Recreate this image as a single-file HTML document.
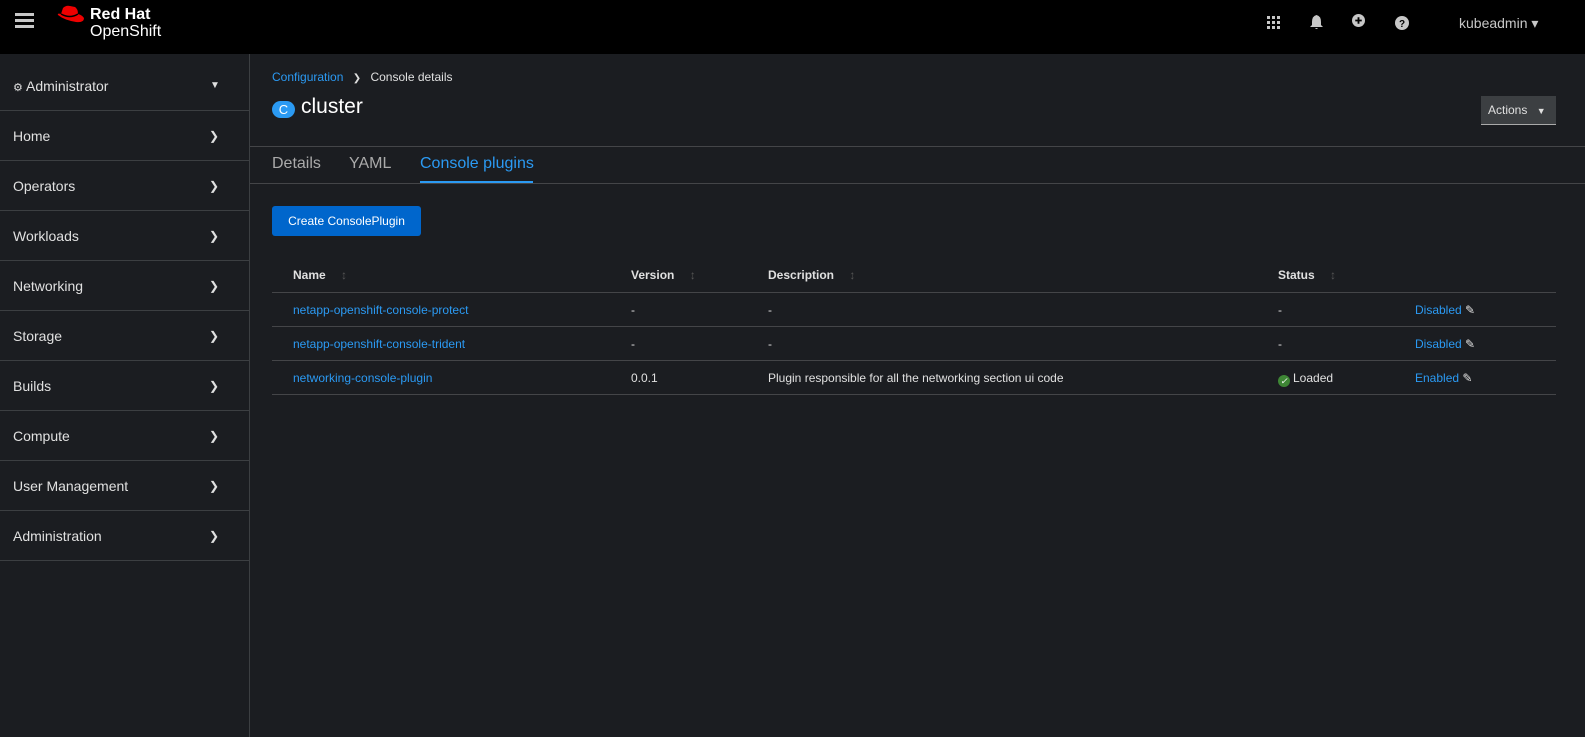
<!DOCTYPE html>
<html><head><meta charset="utf-8"><style>
*{box-sizing:border-box;margin:0;padding:0}
body{width:1585px;height:737px;background:#1b1d21;font-family:"Liberation Sans",sans-serif;color:#e0e0e0;overflow:hidden;position:relative}
.top{position:absolute;left:0;top:0;width:1585px;height:54px;background:#000}
.side{position:absolute;left:0;top:54px;width:250px;height:683px;background:#1b1d21;border-right:1px solid #3c3f42}
.nav{position:absolute;left:0;width:249px;height:50px;border-bottom:1px solid #3c3f42;font-size:14px;color:#e0e0e0;padding-left:13px;line-height:50px}
.nav .ch{position:absolute;left:209px;top:0;font-size:12px}
.abs{position:absolute}
a{color:#2b9af3;text-decoration:none}
.row{position:absolute;left:272px;width:1284px;border-bottom:1px solid #444548;height:34px;font-size:12px}
.row>span{position:absolute;top:10px}
.ok{display:inline-block;width:12px;height:12px;border-radius:6px;background:#3e8635;color:#fff;font-size:9px;text-align:center;line-height:12px;vertical-align:-2px;margin-right:3px}
</style></head><body>
<div class="top">
 <div class="abs" style="left:15px;top:13px;width:19px;height:3px;background:#c7c7c7;box-shadow:0 6px 0 #c7c7c7,0 12px 0 #c7c7c7"></div>
 <svg class="abs" style="left:56px;top:5px" width="30" height="22" viewBox="0 0 30 22"><path d="M7 3 Q10 0 14 1 L19 2 Q22 4 22 9 Q26 10 28 13 Q28 18 20 17 Q8 15 2 10 Q1 8 5 9 Z" fill="#e00"/><path d="M5 9 Q14 14 22 9" stroke="#000" stroke-width="1.5" fill="none"/></svg>
 <div class="abs" style="left:90px;top:6px;font-size:16px;font-weight:bold;color:#fff">Red Hat</div>
 <div class="abs" style="left:90px;top:23px;font-size:16px;color:#fff">OpenShift</div>
 <svg class="abs" style="left:1267px;top:16px" width="13" height="13"><g fill="#c7c7c7"><rect x="0" y="0" width="3" height="3"/><rect x="5" y="0" width="3" height="3"/><rect x="10" y="0" width="3" height="3"/><rect x="0" y="5" width="3" height="3"/><rect x="5" y="5" width="3" height="3"/><rect x="10" y="5" width="3" height="3"/><rect x="0" y="10" width="3" height="3"/><rect x="5" y="10" width="3" height="3"/><rect x="10" y="10" width="3" height="3"/></g></svg>
 <svg class="abs" style="left:1310px;top:15px" width="13" height="15" viewBox="0 0 13 15"><path d="M6.5 0 Q11 1 11 7 L11 10 L13 12 L0 12 L2 10 L2 7 Q2 1 6.5 0Z M5 13 L8 13 Q6.5 15 5 13Z" fill="#c7c7c7"/></svg>
 <svg class="abs" style="left:1352px;top:14px" width="13" height="13" viewBox="0 0 14 14"><circle cx="7" cy="7" r="7" fill="#c7c7c7"/><path d="M7 3.5V10.5M3.5 7H10.5" stroke="#000" stroke-width="2"/></svg>
 <svg class="abs" style="left:1395px;top:16px" width="14" height="14" viewBox="0 0 14 14"><circle cx="7" cy="7" r="7" fill="#c7c7c7"/><text x="7" y="11" font-size="10" font-weight="bold" text-anchor="middle" fill="#000" font-family="Liberation Sans">?</text></svg>
 <div class="abs" style="left:1459px;top:15px;font-size:14px;color:#c7c7c7">kubeadmin ▾</div>
</div>
<div class="side">
 <div class="nav" style="top:7px;height:50px;line-height:50px"><span style="font-size:11px">⚙</span> Administrator<span class="ch" style="left:210px;font-size:10px">▼</span></div>
 <div class="nav" style="top:57px">Home<span class="ch">❯</span></div>
 <div class="nav" style="top:107px">Operators<span class="ch">❯</span></div>
 <div class="nav" style="top:157px">Workloads<span class="ch">❯</span></div>
 <div class="nav" style="top:207px">Networking<span class="ch">❯</span></div>
 <div class="nav" style="top:257px">Storage<span class="ch">❯</span></div>
 <div class="nav" style="top:307px">Builds<span class="ch">❯</span></div>
 <div class="nav" style="top:357px">Compute<span class="ch">❯</span></div>
 <div class="nav" style="top:407px">User Management<span class="ch">❯</span></div>
 <div class="nav" style="top:457px">Administration<span class="ch">❯</span></div>
</div>
<div class="abs" style="left:272px;top:70px;font-size:12px"><a>Configuration</a> <span style="margin:0 6px;color:#ddd;font-size:10px">❯</span> Console details</div>
<div class="abs" style="left:272px;top:101px;width:23px;height:17px;border-radius:9px;background:#2b9af3;color:#fff;font-size:13px;text-align:center;line-height:17px">C</div>
<div class="abs" style="left:301px;top:95px;font-size:21px;color:#fff">cluster</div>
<div class="abs" style="left:1481px;top:96px;width:75px;height:29px;background:#3c3f42;border-bottom:1px solid #aaa;font-size:12px;padding:7px 0 0 7px;color:#e0e0e0">Actions <span style="font-size:9px;margin-left:6px">▼</span></div>
<div class="abs" style="left:250px;top:146px;width:1335px;height:1px;background:#444548"></div>
<div class="abs" style="left:250px;top:183px;width:1335px;height:1px;background:#444548"></div>
<div class="abs" style="left:272px;top:155px;font-size:16px;color:#aaa">Details</div>
<div class="abs" style="left:349px;top:155px;font-size:16px;color:#aaa">YAML</div>
<div class="abs" style="left:420px;top:155px;font-size:16px;color:#2b9af3">Console plugins</div>
<div class="abs" style="left:420px;top:181px;width:113px;height:2px;background:#2b9af3"></div>
<div class="abs" style="left:272px;top:206px;width:149px;height:30px;background:#0066cc;border-radius:3px;color:#fff;font-size:12px;text-align:center;line-height:30px">Create ConsolePlugin</div>
<div class="row" style="top:259px;font-weight:bold;font-size:12px;color:#e0e0e0">
 <span style="left:21px;top:9px">Name <b style="color:#555;margin-left:12px">↕</b></span>
 <span style="left:359px;top:9px">Version <b style="color:#555;margin-left:12px">↕</b></span>
 <span style="left:496px;top:9px">Description <b style="color:#555;margin-left:12px">↕</b></span>
 <span style="left:1006px;top:9px">Status <b style="color:#555;margin-left:12px">↕</b></span>
</div>
<div class="row" style="top:293px"><span style="left:21px"><a>netapp-openshift-console-protect</a></span><span style="left:359px">-</span><span style="left:496px">-</span><span style="left:1006px">-</span><span style="left:1143px"><a>Disabled</a> ✎</span></div>
<div class="row" style="top:327px"><span style="left:21px"><a>netapp-openshift-console-trident</a></span><span style="left:359px">-</span><span style="left:496px">-</span><span style="left:1006px">-</span><span style="left:1143px"><a>Disabled</a> ✎</span></div>
<div class="row" style="top:361px"><span style="left:21px"><a>networking-console-plugin</a></span><span style="left:359px">0.0.1</span><span style="left:496px">Plugin responsible for all the networking section ui code</span><span style="left:1006px"><i class="ok">✓</i>Loaded</span><span style="left:1143px"><a>Enabled</a> ✎</span></div>
</body></html>
